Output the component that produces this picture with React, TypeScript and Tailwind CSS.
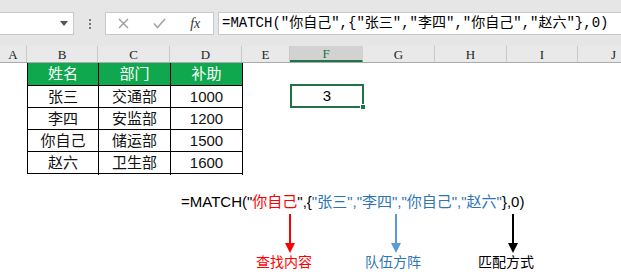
const COLS = [
  { key: "A", w: 27 },
  { key: "B", w: 71 },
  { key: "C", w: 72 },
  { key: "D", w: 72 },
  { key: "E", w: 48 },
  { key: "F", w: 73 },
  { key: "G", w: 72 },
  { key: "H", w: 72 },
  { key: "I", w: 71 },
  { key: "J", w: 72 },
];

const ROWS = [
  ["张三", "交通部", "1000"],
  ["李四", "安监部", "1200"],
  ["你自己", "储运部", "1500"],
  ["赵六", "卫生部", "1600"],
];

const CJK = "font-['Liberation_Sans','Noto_Sans_CJK_SC',sans-serif]";

function FormulaBar() {
  return (
    <div className="h-[46px] bg-[#e6e6e6] pt-[12px] flex items-start">
      <div className="w-[74px] h-[23px] bg-white border border-[#c8c8c8] border-l-0 flex items-center justify-end pr-[5px]">
        <svg width="8" height="5" viewBox="0 0 8 5">
          <path d="M0 0 L8 0 L4 5 Z" fill="#555" />
        </svg>
      </div>
      <div className="w-[31px] h-[23px] flex flex-col items-center justify-center gap-[2px]">
        <span className="w-[2px] h-[2px] bg-[#777]" />
        <span className="w-[2px] h-[2px] bg-[#777]" />
        <span className="w-[2px] h-[2px] bg-[#777]" />
      </div>
      <div className="w-[109px] h-[23px] bg-white border border-[#c8c8c8] flex items-center">
        <div className="w-[36px] flex justify-center">
          <svg width="11" height="11" viewBox="0 0 11 11">
            <path d="M1 1 L10 10 M10 1 L1 10" stroke="#9a9a9a" strokeWidth="1.3" />
          </svg>
        </div>
        <div className="w-[36px] flex justify-center">
          <svg width="13" height="11" viewBox="0 0 13 11">
            <path d="M1 5.5 L4.5 9.5 L12 1" stroke="#a8a8a8" strokeWidth="1.8" fill="none" />
          </svg>
        </div>
        <div className="w-[36px] flex justify-center font-['Liberation_Serif',serif] italic text-[14px] text-[#333] leading-none">
          fx
        </div>
      </div>
      <div className="ml-[4px] flex-1 h-[23px] bg-white border border-[#c8c8c8] border-r-0 flex items-center pl-[3px] font-['Liberation_Mono','Noto_Sans_CJK_SC',monospace] text-[14px] text-black whitespace-nowrap">
        {"=MATCH(″你自己″,{″张三″,″李四″,″你自己″,″赵六″},0)"}
      </div>
    </div>
  );
}

function ColumnHeaders() {
  return (
    <div className="flex h-[17px] bg-[#e9e9e9] border-b border-[#ababab] font-['Liberation_Serif',serif] text-[13px] text-[#222] leading-none">
      {COLS.map((c) =>
        c.key === "F" ? (
          <div
            key={c.key}
            style={{ width: c.w }}
            className="shrink-0 flex items-center justify-center bg-[#d2d2d2] border-b-2 border-[#217346] text-[#217346] border-r border-r-[#d2d2d2]"
          >
            {c.key}
          </div>
        ) : (
          <div
            key={c.key}
            style={{ width: c.w }}
            className="shrink-0 flex items-center justify-center border-r border-[#c9c9c9]"
          >
            {c.key}
          </div>
        )
      )}
    </div>
  );
}

function Sheet() {
  return (
    <div className="flex">
      <div className="w-[27px] shrink-0" />
      <div className={`w-[216px] shrink-0 border-l border-black ${CJK} text-[15px]`}>
        <div className="grid grid-cols-[71px_72px_72px] h-[22px] bg-[#10a84f] text-white">
          <div className="flex items-center justify-center border-r border-black">姓名</div>
          <div className="flex items-center justify-center border-r border-black">部门</div>
          <div className="flex items-center justify-center border-r border-black">补助</div>
        </div>
        {ROWS.map((r) => (
          <div key={r[0]} className="grid grid-cols-[71px_72px_72px] h-[22px] border-t border-black text-[#111]">
            <div className="flex items-center justify-center border-r border-black">{r[0]}</div>
            <div className="flex items-center justify-center border-r border-black">{r[1]}</div>
            <div className="flex items-center justify-center border-r border-black">{r[2]}</div>
          </div>
        ))}
        <div className="border-t border-black" />
      </div>
      <div className="w-[47px] shrink-0" />
      <div className="pt-[21px]">
        <div className="relative w-[74px] h-[24px] border-2 border-[#217346] flex items-center justify-center font-['Liberation_Sans',sans-serif] text-[15px] text-black">
          3
          <span className="absolute -right-[4px] -bottom-[4px] w-[6px] h-[6px] bg-[#217346] border border-white" />
        </div>
      </div>
    </div>
  );
}

function Annotation() {
  return (
    <div className={CJK}>
      <div className="mt-[18px] pl-[181px] h-[20px] flex items-center text-[15px] text-black whitespace-nowrap">
        {'=MATCH("'}
        <span className="text-[#ff0000]">你自己</span>
        {'",{'}
        <span className="text-[#2e75b6]">{'"张三","李四","你自己","赵六"'}</span>
        {"},0)"}
      </div>
      <svg width="621" height="42" className="block">
        <line x1="290" y1="2" x2="290" y2="32" stroke="#ff0000" strokeWidth="2" />
        <path d="M285 31 L295 31 L290 41 Z" fill="#ff0000" />
        <line x1="396" y1="2" x2="396" y2="32" stroke="#5b9bd5" strokeWidth="2" />
        <path d="M391 31 L401 31 L396 41 Z" fill="#5b9bd5" />
        <line x1="513" y1="2" x2="513" y2="32" stroke="#000" strokeWidth="2" />
        <path d="M508 31 L518 31 L513 41 Z" fill="#000" />
      </svg>
      <div className="flex text-[14px] leading-[16px] pl-[256px]">
        <span className="text-[#ff0000]">查找内容</span>
        <span className="ml-[53px] text-[#2e75b6]">队伍方阵</span>
        <span className="ml-[57px] text-black">匹配方式</span>
      </div>
    </div>
  );
}

export default function App() {
  return (
    <div className="w-[621px] h-[274px] bg-white overflow-hidden">
      <FormulaBar />
      <ColumnHeaders />
      <Sheet />
      <Annotation />
    </div>
  );
}
